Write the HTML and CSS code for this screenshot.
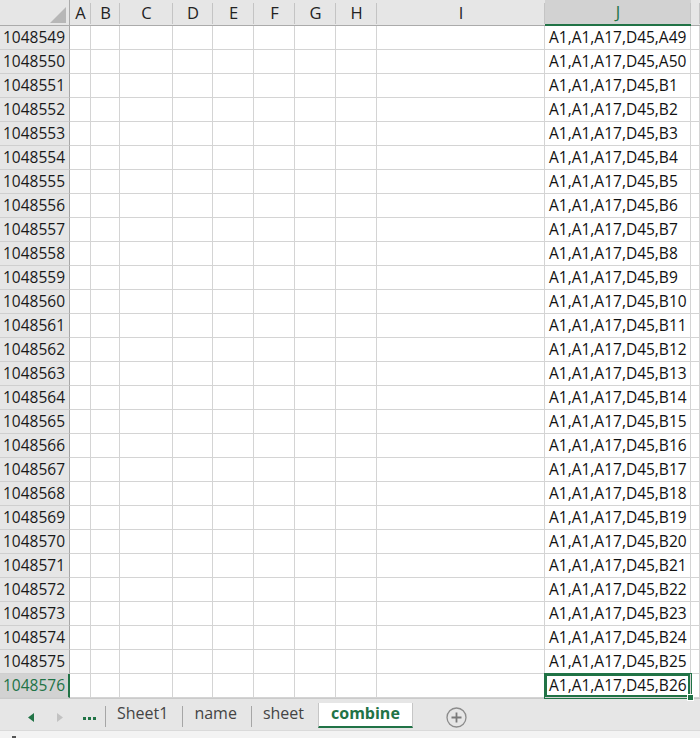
FILE: index.html
```html
<!DOCTYPE html>
<html>
<head>
<meta charset="utf-8">
<title>combine</title>
<link rel="stylesheet" href="styles.css">
</head>
<body>
<div class="sheet">
  <div class="ch corner"><svg class="tri" width="16" height="16" viewBox="0 0 16 16"><polygon points="16,0 16,16 0,16" fill="#b7b7b7"/></svg></div>
  <div class="ch">A</div><div class="ch">B</div><div class="ch">C</div><div class="ch">D</div><div class="ch">E</div><div class="ch">F</div><div class="ch">G</div><div class="ch">H</div><div class="ch">I</div><div class="ch selcol">J</div><div class="ch"></div>

  <div class="rh">1048549</div><div></div><div></div><div></div><div></div><div></div><div></div><div></div><div></div><div></div><div class="v">A1,A1,A17,D45,A49</div><div></div>
  <div class="rh">1048550</div><div></div><div></div><div></div><div></div><div></div><div></div><div></div><div></div><div></div><div class="v">A1,A1,A17,D45,A50</div><div></div>
  <div class="rh">1048551</div><div></div><div></div><div></div><div></div><div></div><div></div><div></div><div></div><div></div><div class="v">A1,A1,A17,D45,B1</div><div></div>
  <div class="rh">1048552</div><div></div><div></div><div></div><div></div><div></div><div></div><div></div><div></div><div></div><div class="v">A1,A1,A17,D45,B2</div><div></div>
  <div class="rh">1048553</div><div></div><div></div><div></div><div></div><div></div><div></div><div></div><div></div><div></div><div class="v">A1,A1,A17,D45,B3</div><div></div>
  <div class="rh">1048554</div><div></div><div></div><div></div><div></div><div></div><div></div><div></div><div></div><div></div><div class="v">A1,A1,A17,D45,B4</div><div></div>
  <div class="rh">1048555</div><div></div><div></div><div></div><div></div><div></div><div></div><div></div><div></div><div></div><div class="v">A1,A1,A17,D45,B5</div><div></div>
  <div class="rh">1048556</div><div></div><div></div><div></div><div></div><div></div><div></div><div></div><div></div><div></div><div class="v">A1,A1,A17,D45,B6</div><div></div>
  <div class="rh">1048557</div><div></div><div></div><div></div><div></div><div></div><div></div><div></div><div></div><div></div><div class="v">A1,A1,A17,D45,B7</div><div></div>
  <div class="rh">1048558</div><div></div><div></div><div></div><div></div><div></div><div></div><div></div><div></div><div></div><div class="v">A1,A1,A17,D45,B8</div><div></div>
  <div class="rh">1048559</div><div></div><div></div><div></div><div></div><div></div><div></div><div></div><div></div><div></div><div class="v">A1,A1,A17,D45,B9</div><div></div>
  <div class="rh">1048560</div><div></div><div></div><div></div><div></div><div></div><div></div><div></div><div></div><div></div><div class="v">A1,A1,A17,D45,B10</div><div></div>
  <div class="rh">1048561</div><div></div><div></div><div></div><div></div><div></div><div></div><div></div><div></div><div></div><div class="v">A1,A1,A17,D45,B11</div><div></div>
  <div class="rh">1048562</div><div></div><div></div><div></div><div></div><div></div><div></div><div></div><div></div><div></div><div class="v">A1,A1,A17,D45,B12</div><div></div>
  <div class="rh">1048563</div><div></div><div></div><div></div><div></div><div></div><div></div><div></div><div></div><div></div><div class="v">A1,A1,A17,D45,B13</div><div></div>
  <div class="rh">1048564</div><div></div><div></div><div></div><div></div><div></div><div></div><div></div><div></div><div></div><div class="v">A1,A1,A17,D45,B14</div><div></div>
  <div class="rh">1048565</div><div></div><div></div><div></div><div></div><div></div><div></div><div></div><div></div><div></div><div class="v">A1,A1,A17,D45,B15</div><div></div>
  <div class="rh">1048566</div><div></div><div></div><div></div><div></div><div></div><div></div><div></div><div></div><div></div><div class="v">A1,A1,A17,D45,B16</div><div></div>
  <div class="rh">1048567</div><div></div><div></div><div></div><div></div><div></div><div></div><div></div><div></div><div></div><div class="v">A1,A1,A17,D45,B17</div><div></div>
  <div class="rh">1048568</div><div></div><div></div><div></div><div></div><div></div><div></div><div></div><div></div><div></div><div class="v">A1,A1,A17,D45,B18</div><div></div>
  <div class="rh">1048569</div><div></div><div></div><div></div><div></div><div></div><div></div><div></div><div></div><div></div><div class="v">A1,A1,A17,D45,B19</div><div></div>
  <div class="rh">1048570</div><div></div><div></div><div></div><div></div><div></div><div></div><div></div><div></div><div></div><div class="v">A1,A1,A17,D45,B20</div><div></div>
  <div class="rh">1048571</div><div></div><div></div><div></div><div></div><div></div><div></div><div></div><div></div><div></div><div class="v">A1,A1,A17,D45,B21</div><div></div>
  <div class="rh">1048572</div><div></div><div></div><div></div><div></div><div></div><div></div><div></div><div></div><div></div><div class="v">A1,A1,A17,D45,B22</div><div></div>
  <div class="rh">1048573</div><div></div><div></div><div></div><div></div><div></div><div></div><div></div><div></div><div></div><div class="v">A1,A1,A17,D45,B23</div><div></div>
  <div class="rh">1048574</div><div></div><div></div><div></div><div></div><div></div><div></div><div></div><div></div><div></div><div class="v">A1,A1,A17,D45,B24</div><div></div>
  <div class="rh">1048575</div><div></div><div></div><div></div><div></div><div></div><div></div><div></div><div></div><div></div><div class="v">A1,A1,A17,D45,B25</div><div></div>
  <div class="rh selrow">1048576</div><div></div><div></div><div></div><div></div><div></div><div></div><div></div><div></div><div></div><div class="v active">A1,A1,A17,D45,B26<span class="handle"></span></div><div></div>
</div>

<div class="tabbar">
  <svg class="nav first" width="6" height="9" viewBox="0 0 6 9"><polygon points="6,0 6,9 0,4.5" fill="#217346"/></svg>
  <svg class="nav second" width="6" height="9" viewBox="0 0 6 9"><polygon points="0,0 0,9 6,4.5" fill="#c2c2c2"/></svg>
  <svg class="dots" width="13" height="3" viewBox="0 0 13 3"><rect x="0" y="0" width="3" height="3" fill="#217346"/><rect x="5" y="0" width="3" height="3" fill="#217346"/><rect x="10" y="0" width="3" height="3" fill="#217346"/></svg>
  <span class="sep lead"></span>
  <span class="tab">Sheet1</span>
  <span class="sep"></span>
  <span class="tab">name</span>
  <span class="sep"></span>
  <span class="tab">sheet</span>
  <span class="tab current">combine</span>
  <svg class="add" width="21" height="21" viewBox="0 0 21 21"><circle cx="10.5" cy="10.5" r="9.5" fill="none" stroke="#8c8c8c" stroke-width="1.3"/><path d="M10.5 5.5v10M5.5 10.5h10" stroke="#7a7a7a" stroke-width="1.8"/></svg>
</div>
<div class="status"><span class="mark"></span></div>
</body>
</html>
```
FILE: styles.css
```css
* { box-sizing: border-box; }

html, body {
  margin: 0;
  padding: 0;
}

body {
  width: 700px;
  height: 738px;
  overflow: hidden;
  background: #ffffff;
  font-family: "Open Sans", "Liberation Sans", sans-serif;
  color: #000;
}

.sheet {
  display: grid;
  grid-template-columns: 70px 21px 29px 53px 40px 41px 41px 41px 41px 168px 146px 9px;
  grid-template-rows: 26px;
  grid-auto-rows: 24px;
}

.sheet > div {
  border-right: 1px solid #d4d4d4;
  border-bottom: 1px solid #d4d4d4;
  font-size: 15.5px;
  line-height: 23px;
  white-space: nowrap;
  overflow: hidden;
  color: #111;
}

.sheet > .ch {
  border-right: none;
  border-bottom: 1px solid #ababab;
  background: linear-gradient(#c4c4c4, #c4c4c4) right 3px / 1px calc(100% - 4px) no-repeat, #e6e6e6;
  text-align: center;
  color: #222;
  font-size: 16.5px;
  line-height: 25px;
}

.sheet > .corner {
  display: flex;
  justify-content: flex-end;
  align-items: flex-end;
  padding: 0 3px 2px 0;
  background: #e6e6e6;
  border-right: 1px solid #ababab;
}

.tri { display: block; }

.sheet > .selcol {
  background: linear-gradient(#c4c4c4, #c4c4c4) right 3px / 1px calc(100% - 4px) no-repeat, #d2d2d2;
  color: #217346;
  border-bottom: 2px solid #217346;
  line-height: 24px;
}

.sheet > .rh {
  background: #e6e6e6;
  border-right: 1px solid #a8a8a8;
  border-bottom-color: #cfcfcf;
  padding-left: 3px;
  color: #1a1a1a;
}

.sheet > .selrow {
  background: #d2d2d2;
  color: #217346;
  border-right: 2px solid #217346;
}

.sheet > .v {
  padding-left: 4px;
}

.sheet > .active {
  position: relative;
  z-index: 1;
  overflow: visible;
  box-shadow: 0 0 0 1px #217346, inset 0 0 0 2px #217346;
}

.handle {
  position: absolute;
  right: -4px;
  bottom: -4px;
  width: 7px;
  height: 7px;
  background: #217346;
  border: 1px solid #ffffff;
}

.tabbar {
  display: flex;
  align-items: stretch;
  height: 32px;
  padding: 4px 0 2px 0;
  background: #e6e6e6;
  border-top: 1px solid #cacaca;
}

.nav {
  align-self: center;
  margin-top: 3px;
}

.nav.first { margin-left: 28px; }
.nav.second { margin-left: 23px; }

.dots {
  align-self: center;
  margin: 6px 0 0 20px;
}

.sep {
  width: 1px;
  margin: 3px 0 1px 0;
  background: #a6a6a6;
}

.sep.lead { margin-left: 9px; }

.tab {
  padding: 0 14px 0 11px;
  font-size: 16px;
  line-height: 20px;
  color: #444;
}

.tab.current {
  padding: 0 12px;
  background: #ffffff;
  border-left: 1px solid #c6c6c6;
  border-right: 1px solid #c6c6c6;
  border-bottom: 2px solid #217346;
  color: #217346;
  font-weight: 700;
}

.add {
  align-self: center;
  margin: 3px 0 0 33px;
}

.status {
  height: 8px;
  background: #f3f3f3;
  border-top: 1px solid #dadada;
  padding-left: 12px;
  display: flex;
  align-items: flex-end;
}

.mark {
  width: 4px;
  height: 2px;
  background: #555;
}
```
